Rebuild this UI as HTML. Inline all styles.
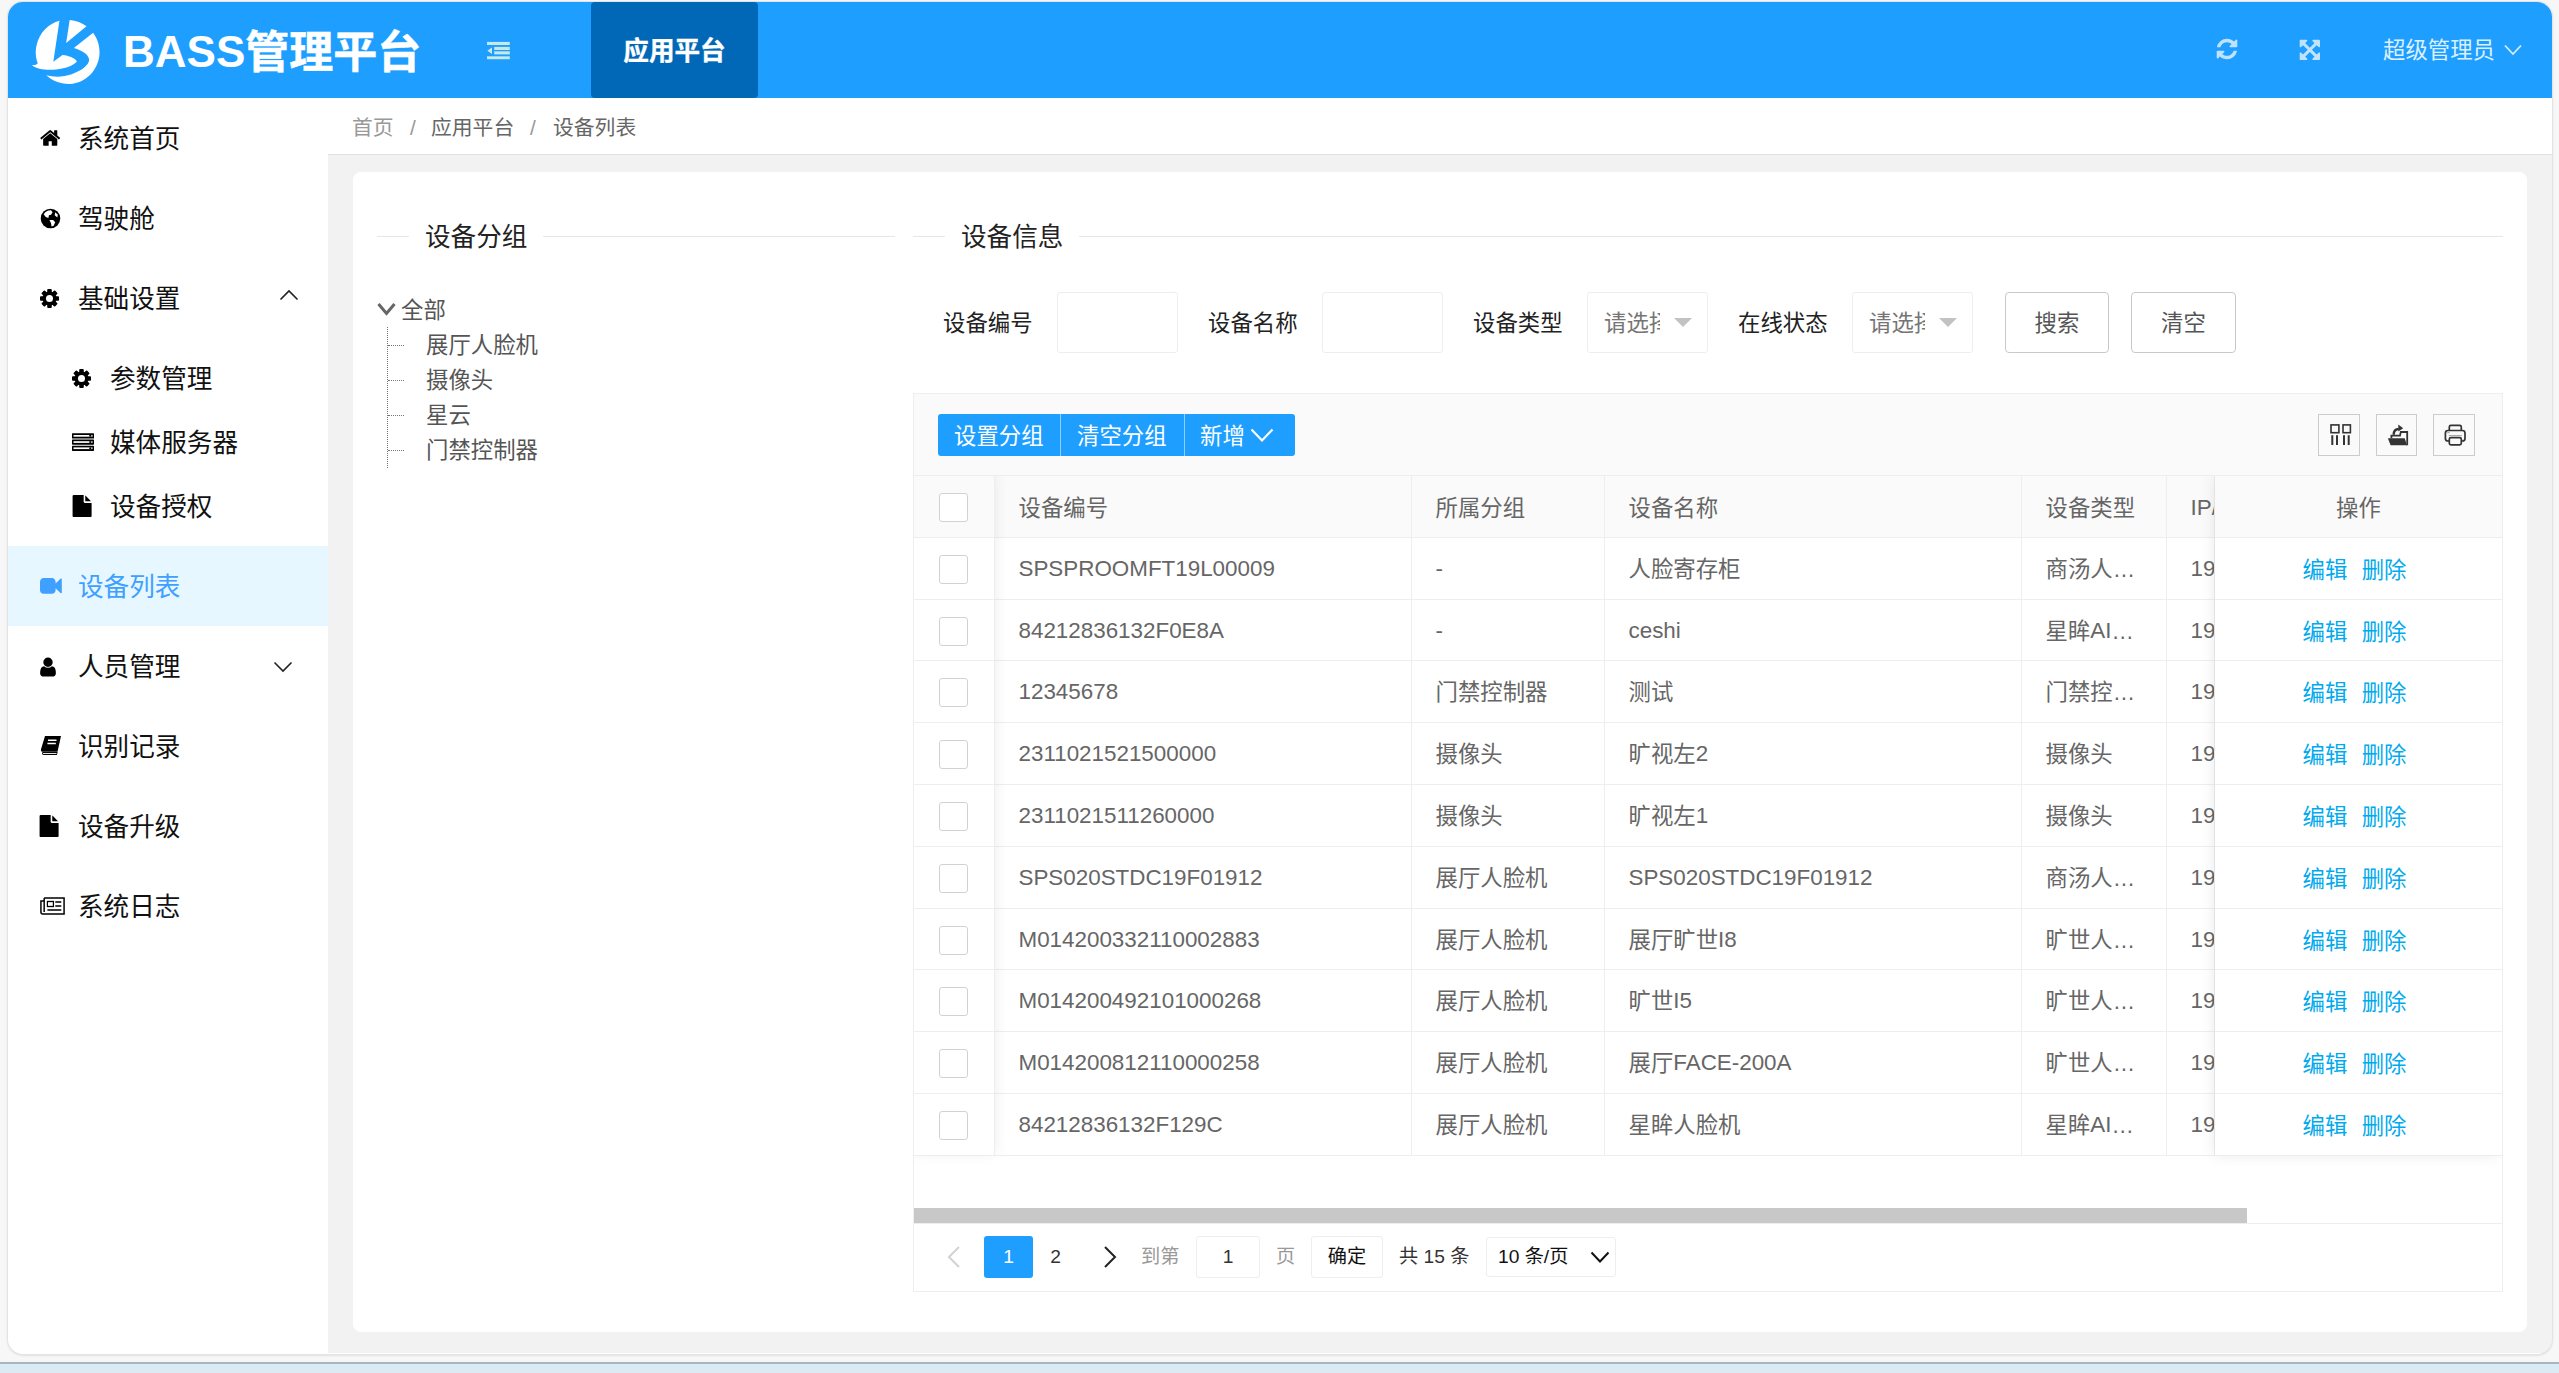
<!DOCTYPE html>
<html lang="zh-CN"><head><meta charset="utf-8"><title>BASS管理平台</title>
<style>
*{box-sizing:border-box;margin:0;padding:0}
html,body{width:2559px;height:1373px;overflow:hidden}
body{background:#f7f7f7;font-family:"Liberation Sans","Noto Sans CJK SC",sans-serif;color:#333;position:relative}
.ab{position:absolute}
.taskbar{position:absolute;left:0;top:1362px;width:2559px;height:11px;background:#daebf6;border-top:2px solid #a9b6c0}
.win{position:absolute;left:8px;top:2px;width:2544px;height:1352px;border-radius:15px;overflow:hidden;background:#f2f2f2;box-shadow:0 0 0 1px #e4e4e4,0 1px 3px rgba(0,0,0,.18)}
.pg{position:absolute;left:-8px;top:-2px;width:2559px;height:1373px}
.hdr{position:absolute;left:0;top:0;width:2559px;height:98px;background:#1e9fff}
.title{position:absolute;left:123px;top:23.5px;height:56px;line-height:56px;font-size:44px;font-weight:bold;color:#fff;white-space:nowrap}
.tab{-webkit-text-stroke:.35px #fff;position:absolute;left:591px;top:2px;width:167px;height:96px;border-radius:4px;padding-top:1px;background:#0068b7;color:#fff;font-weight:bold;font-size:25.6px;line-height:96px;text-align:center}
.uname{position:absolute;left:2383px;top:21px;height:60px;line-height:60px;font-size:22.4px;color:rgba(255,255,255,.85);white-space:nowrap}
.side{position:absolute;left:8px;top:98px;width:320px;height:1260px;background:#fff}
.mi{position:absolute;left:8px;width:320px;height:80px;line-height:80px;font-size:25.6px;color:#111;white-space:nowrap}
.mi span{position:absolute;left:70px;top:1px}
.mi.sub span{left:102px}
.mi.on{background:#e6f7ff;color:#40a0ff}
.crumb{position:absolute;left:328px;top:98px;width:2231px;height:57px;background:#fff;border-bottom:1px solid #e0e0e0;font-size:20.8px;line-height:59px;color:#666;white-space:nowrap}
.crumb span{position:absolute;top:0}
.card{position:absolute;left:353px;top:172px;width:2174px;height:1160px;background:#fff;border-radius:8px}
.lg{position:absolute;font-size:25.6px;line-height:42px;height:40px;color:#222;white-space:nowrap}
.hl{position:absolute;height:1px;background:#e6e6e6}
.tree{position:absolute;font-size:22.4px;color:#555;line-height:35.2px;height:35.2px;white-space:nowrap}
.vdot{position:absolute;width:0;border-left:1px dotted #777}
.hdot{position:absolute;height:0;border-top:1px dotted #777}
.fl{position:absolute;top:292px;height:61px;line-height:63px;font-size:22.4px;color:#222;white-space:nowrap}
.inp{position:absolute;top:292px;height:61px;border:1px solid #eee;border-radius:3px;background:#fff}
.sel{position:absolute;top:292px;height:61px;width:121px;border:1px solid #eee;border-radius:3px;background:#fff;font-size:22.4px;line-height:61px;color:#757575;overflow:hidden;white-space:nowrap}
.sel span{position:absolute;left:16px;top:0;width:56px;overflow:hidden}
.sel i{position:absolute;left:86px;top:25px;width:0;height:0;border:9.600px solid transparent;border-top-color:#c2c2c2;border-bottom-width:0}
.btn{position:absolute;top:292px;height:61px;border:1px solid #c9c9c9;border-radius:4px;background:#fff;font-size:22.4px;line-height:61px;color:#555;text-align:center;white-space:nowrap}
.tbl{position:absolute;left:913px;top:393px;width:1590px;height:899px;border:1px solid #eee;background:#fff}
.tbar{position:absolute;left:914px;top:394px;width:1588px;height:82px;background:#fafafa;border-bottom:1px solid #eee}
.bg{position:absolute;left:938px;top:414px;height:42px;background:#1e9fff;border-radius:3px;color:#fff;font-size:22.4px;line-height:42px;white-space:nowrap}
.bg span{position:absolute;top:1.5px}
.bg b{position:absolute;top:0;width:1px;height:42px;background:rgba(255,255,255,.5)}
.tool{position:absolute;top:414px;width:42px;height:42px;border:1px solid #ccc}
.th{position:absolute;left:914px;top:476px;width:1588px;height:62px;background:#fafafa;border-bottom:1px solid #eee}
.tr{position:absolute;left:914px;width:1588px;border-bottom:1px solid #eee;background:#fff}
.c{position:absolute;top:0;height:100%;font-size:22.4px;color:#666;white-space:nowrap;overflow:hidden;line-height:61px}
.th .c{line-height:63px}
.c u{text-decoration:none;position:relative;top:1px}
.vl{position:absolute;width:1px;background:#eee}
.cb{position:absolute;left:939px;width:29px;height:29px;border:1px solid #d2d2d2;border-radius:3px;background:#fff}
.lk{color:#01aaed;position:absolute;top:2px}
.sb{position:absolute;left:914px;top:1208px;width:1333px;height:15px;background:#c8c8c8}
.pgl{position:absolute;left:914px;top:1223px;width:1588px;height:1px;background:#eee}
.pp{position:absolute;top:1236px;height:42px;line-height:42px;font-size:19.200px;white-space:nowrap;color:#333}
.pbox{border:1px solid #eee;border-radius:3px;background:#fff;text-align:center;line-height:40px}
.fxclip{position:absolute;left:914px;top:476px;width:1588px;height:747px;overflow:hidden;pointer-events:none}
.fxl{position:absolute;left:0;top:0;width:81px;height:680px;box-shadow:0 -1.600px 12.800px rgba(0,0,0,.08)}
.fxr{position:absolute;left:1301px;top:0;width:287px;height:680px;box-shadow:-1.600px 0 12.800px rgba(0,0,0,.08)}

</style></head>
<body>
<div class="taskbar"></div>
<div class="win"><div class="pg">
<div class="hdr"></div>
<svg class="ab" style="left:0;top:0" width="120" height="120" viewBox="0 0 1373 1373">
<g fill="#fff">
<path d="M680 238 C560 270 450 370 418 520 C400 610 412 670 432 722 C420 745 395 748 365 743 C420 790 520 805 640 795 C760 782 850 745 880 700 C850 660 790 640 715 630 L610 706 Z"/>
<path d="M797 229 C870 235 940 262 990 300 L757 492 Z"/>
<path d="M1065 376 C1120 450 1145 540 1138 630 C1120 800 990 950 800 962 C690 965 590 920 530 862 C620 885 720 885 820 850 C930 810 1010 750 1020 690 C1022 625 940 575 845 548 Z"/>
</g></svg>
<div class="title">BASS<span style="position:relative;top:1.800px;-webkit-text-stroke:.5px #fff">管理平台</span></div>
<svg class="ab" style="left:487px;top:41px" width="24" height="19" viewBox="0 0 24 19"><g fill="#c5e9e6"><rect x="0" y="0.900" width="22.800" height="3.100"/><rect x="7.200" y="5.900" width="15.600" height="3.100"/><rect x="7.200" y="10.300" width="15.600" height="3.100"/><rect x="0" y="15.300" width="22.800" height="2.900"/><path d="M0.300 9.700 L5 6.500 V13Z"/></g></svg>
<div class="tab">应用平台</div>
<svg class="ab" style="left:2214.8px;top:37.3px" width="24.0" height="24.0" viewBox="0 0 1792 1792"><path fill="#bfe3ff" d="M1639 1056q0 5-1 7-64 268-268 434.500t-478 166.500q-146 0-282.500-55t-243.500-157l-129 129q-19 19-45 19t-45-19-19-45v-448q0-26 19-45t45-19h448q26 0 45 19t19 45-19 45l-137 137q71 66 161 102t187 36q134 0 250-65t186-179q11-17 53-117 8-23 30-23h192q13 0 22.500 9.500t9.500 22.500zm25-800v448q0 26-19 45t-45 19h-448q-26 0-45-19t-19-45 19-45l138-138q-148-137-349-137-134 0-250 65t-186 179q-11 17-53 117-8 23-30 23h-199q-13 0-22.500-9.500t-9.500-22.500v-7q65-268 270-434.500t480-166.500q146 0 284 55.500t245 156.500l130-129q19-19 45-19t45 19 19 45z"/></svg>
<svg class="ab" style="left:2298.3px;top:37.5px" width="23.7" height="23.7" viewBox="0 0 1792 1792"><path fill="#bfe3ff" d="M1411 541l-355 355 355 355 144-144q29-31 70-14 39 17 39 59v448q0 26-19 45t-45 19h-448q-42 0-59-40-17-39 14-69l144-144-355-355-355 355 144 144q31 30 14 69-17 40-59 40h-448q-26 0-45-19t-19-45v-448q0-42 40-59 39-17 69 14l144 144 355-355-355-355-144 144q-19 19-45 19-12 0-24-5-40-17-40-59v-448q0-26 19-45t45-19h448q42 0 59 40 17 39-14 69l-144 144 355 355 355-355-144-144q-31-30-14-69 17-40 59-40h448q26 0 45 19t19 45v448q0 42-39 59-13 5-25 5-26 0-45-19z"/></svg>
<div class="uname">超级管理员</div>
<svg class="ab" style="left:2504px;top:44px" width="18" height="12" viewBox="0 0 18 12"><path d="M1 1.5 L9 10 L17 1.5" fill="none" stroke="#d5edff" stroke-width="1.8"/></svg>
<div class="side"></div>
<div class="mi" style="top:98px"><svg class="ab" style="left:31.5px;top:29.0px" width="22.0" height="22.0" viewBox="0 0 1792 1792"><path fill="#000" d="M1408 992v480q0 26-19 45t-45 19h-384v-384h-256v384h-384q-26 0-45-19t-19-45v-480q0-1 .5-3t.5-3l575-474 575 474q1 2 1 6zm223-69l-62 74q-8 9-21 11h-3q-13 0-21-7l-692-577-692 577q-12 8-24 7-13-2-21-11l-62-74q-8-10-7-23.5t11-21.5l719-599q32-26 76-26t76 26l244 204v-195q0-14 9-23t23-9h192q14 0 23 9t9 23v408l219 182q10 8 11 21.5t-7 23.5z"/></svg><span>系统首页</span></div>
<div class="mi" style="top:178px"><svg class="ab" style="left:31.500px;top:29.500px" width="21" height="21" viewBox="0 0 20 20"><circle cx="10" cy="10" r="9.300" fill="#000"/><path d="M3.5 6 C5 3.5 8 2 10.5 2.2 L12 4 L10.5 6.5 L8.5 7 L8 9.5 L5.5 8.5Z M9 11.5 L12.5 11.5 L14.5 13.5 L13 17 L11 17.5 L10.5 14.5Z M14.5 4 L17 6.5 L16.5 9 L14 7Z" fill="#fff"/></svg><span>驾驶舱</span></div>
<div class="mi" style="top:258px"><svg class="ab" style="left:32.0px;top:31.0px" width="19.0" height="19.0" viewBox="-10 -10 20 20"><g fill="#000"><rect x="-2.400" y="-10" width="4.800" height="20" rx="1" transform="rotate(0)"/><rect x="-2.400" y="-10" width="4.800" height="20" rx="1" transform="rotate(45)"/><rect x="-2.400" y="-10" width="4.800" height="20" rx="1" transform="rotate(90)"/><rect x="-2.400" y="-10" width="4.800" height="20" rx="1" transform="rotate(135)"/><circle r="7.4"/></g><circle r="3.700" fill="#fff"/></svg><span>基础设置</span><svg class="ab" style="left:271px;top:30.500px" width="20" height="12" viewBox="0 0 20 12"><path d="M1.5 10.5 L10 2 L18.500 10.500" fill="none" stroke="#222" stroke-width="1.6"/></svg></div>
<div class="mi sub" style="top:338px;height:80px"><svg class="ab" style="left:64.0px;top:31.0px" width="19.0" height="19.0" viewBox="-10 -10 20 20"><g fill="#000"><rect x="-2.400" y="-10" width="4.800" height="20" rx="1" transform="rotate(0)"/><rect x="-2.400" y="-10" width="4.800" height="20" rx="1" transform="rotate(45)"/><rect x="-2.400" y="-10" width="4.800" height="20" rx="1" transform="rotate(90)"/><rect x="-2.400" y="-10" width="4.800" height="20" rx="1" transform="rotate(135)"/><circle r="7.4"/></g><circle r="3.700" fill="#fff"/></svg><span>参数管理</span></div>
<div class="mi sub" style="top:402px"><svg class="ab" style="left:64px;top:31px" width="22" height="18" viewBox="0 0 22 18"><g fill="#000"><rect x="0" y="0.300" width="22" height="5.200" rx=".6"/><rect x="0" y="6.500" width="22" height="5.200" rx=".6"/><rect x="0" y="12.700" width="22" height="5.200" rx=".6"/></g><g fill="#fff"><rect x="1.500" y="2" width="19" height="1.700"/><rect x="1.500" y="8.200" width="19" height="1.700"/><rect x="1.500" y="14.400" width="19" height="1.700"/></g><g fill="#000"><rect x="17.300" y="2" width="2" height="1.700"/><rect x="17.300" y="8.200" width="2" height="1.700"/><rect x="17.300" y="14.400" width="2" height="1.700"/></g></svg><span>媒体服务器</span></div>
<div class="mi sub" style="top:466px"><svg class="ab" style="left:62.5px;top:29.1px" width="22.2" height="22.2" viewBox="0 0 1792 1792"><path fill="#000" d="M1152 512v-472q22 14 36 28l408 408q14 14 28 36h-472zm-128 32q0 40 28 68t68 28h544v1056q0 40-28 68t-68 28h-1344q-40 0-68-28t-28-68v-1600q0-40 28-68t68-28h800v544z"/></svg><span>设备授权</span></div>
<div class="mi on" style="top:546px"><svg class="ab" style="left:32.4px;top:29.3px" width="21.8" height="21.8" viewBox="0 0 1792 1792"><path fill="#40a0ff" d="M1792 352v1088q0 42-39 59-13 5-25 5-27 0-45-19l-403-403v166q0 119-84.500 203.500t-203.500 84.500h-704q-119 0-203.500-84.500t-84.500-203.500v-704q0-119 84.500-203.500t203.500-84.500h704q119 0 203.500 84.500t84.500 203.500v165l403-402q18-19 45-19 12 0 25 5 39 17 39 59z"/></svg><span>设备列表</span></div>
<div class="mi" style="top:626px"><svg class="ab" style="left:29.0px;top:29.5px" width="22.0" height="22.0" viewBox="0 0 1792 1792"><path fill="#000" d="M1536 1399q0 109-62.500 187t-150.500 78h-854q-88 0-150.500-78t-62.500-187q0-85 8.500-160.500t31.500-152 58.500-131 94-89 134.500-34.500q131 128 313 128t313-128q76 0 134.500 34.500t94 89 58.500 131 31.500 152 8.500 160.500zm-256-887q0 159-112.500 271.500t-271.500 112.500-271.500-112.500-112.500-271.500 112.500-271.500 271.500-112.500 271.500 112.500 112.500 271.500z"/></svg><span>人员管理</span><svg class="ab" style="left:265px;top:35px" width="20" height="12" viewBox="0 0 20 12"><path d="M1.5 1.500 L10 10 L18.500 1.500" fill="none" stroke="#222" stroke-width="1.600"/></svg></div>
<div class="mi" style="top:706px"><svg class="ab" style="left:31.500px;top:29px" width="22" height="21" viewBox="0 0 22 20" preserveAspectRatio="none"><path d="M5 1 H21 L17.500 16 H3 C1.500 16 .5 15 1 13.500Z" fill="#000"/><path d="M3.200 16.300 H17.600 L17 19 H3.500 C1.800 19 1.500 16.300 3.200 16.300Z" fill="#000"/><path d="M8 5 H16.500 M7.400 8 H15.800" stroke="#fff" stroke-width="1.400"/><path d="M3 17.600 H16.500" stroke="#fff" stroke-width=".9"/></svg><span>识别记录</span></div>
<div class="mi" style="top:786px"><svg class="ab" style="left:30.4px;top:28.8px" width="22.2" height="22.2" viewBox="0 0 1792 1792"><path fill="#000" d="M1152 512v-472q22 14 36 28l408 408q14 14 28 36h-472zm-128 32q0 40 28 68t68 28h544v1056q0 40-28 68t-68 28h-1344q-40 0-68-28t-28-68v-1600q0-40 28-68t68-28h800v544z"/></svg><span>设备升级</span></div>
<div class="mi" style="top:866px"><svg class="ab" style="left:32px;top:30.500px" width="25" height="18" viewBox="0 0 27 18" preserveAspectRatio="none"><path d="M4.500 1 H26 V17 H3 C1.800 17 1 16 1 15 V4 H4.500" fill="none" stroke="#000" stroke-width="1.600"/><path d="M4.500 1 V15" stroke="#000" stroke-width="1.600"/><rect x="8" y="4.500" width="6.500" height="5" fill="none" stroke="#000" stroke-width="1.300"/><path d="M16.500 5 H23 M16.500 9 H23 M8 13 H23" stroke="#000" stroke-width="1.500"/></svg><span>系统日志</span></div>
<div class="crumb"><span style="left:24px;color:#999">首页</span><span style="left:82px;color:#999">/</span><span style="left:103px">应用平台</span><span style="left:202px;color:#999">/</span><span style="left:225px">设备列表</span></div>
<div class="card"></div>
<div class="hl" style="left:377px;top:236px;width:518px"></div>
<div class="lg" style="left:409px;top:216px;width:134px;background:#fff;padding-left:16px">设备分组</div>
<div class="hl" style="left:913px;top:236px;width:1590px"></div>
<div class="lg" style="left:945px;top:216px;width:134px;background:#fff;padding-left:16px">设备信息</div>
<div class="ab botline" style="left:8px;top:1353px;width:2544px;height:1px;background:#fff"></div>
<svg class="ab" style="left:377px;top:302px" width="19" height="14" viewBox="0 0 19 14"><path d="M1.500 2 L9.500 11.500 L17.500 2" fill="none" stroke="#666" stroke-width="3"/></svg>
<div class="tree" style="left:401px;top:293px">全部</div>
<div class="vdot" style="left:387px;top:327px;height:141px"></div>
<div class="hdot" style="left:388px;top:345px;width:16px"></div>
<div class="tree" style="left:426px;top:327.8px">展厅人脸机</div>
<div class="hdot" style="left:388px;top:380px;width:16px"></div>
<div class="tree" style="left:426px;top:363.0px">摄像头</div>
<div class="hdot" style="left:388px;top:415px;width:16px"></div>
<div class="tree" style="left:426px;top:398.2px">星云</div>
<div class="hdot" style="left:388px;top:450px;width:16px"></div>
<div class="tree" style="left:426px;top:433.4px">门禁控制器</div>
<div class="fl" style="left:943px">设备编号</div><div class="inp" style="left:1057px;width:121px"></div>
<div class="fl" style="left:1208px">设备名称</div><div class="inp" style="left:1322px;width:121px"></div>
<div class="fl" style="left:1473px">设备类型</div><div class="sel" style="left:1587px"><span>请选择</span><i></i></div>
<div class="fl" style="left:1738px">在线状态</div><div class="sel" style="left:1852px"><span>请选择</span><i></i></div>
<div class="btn" style="left:2005px;width:104px">搜索</div><div class="btn" style="left:2131px;width:105px">清空</div>
<div class="tbl"></div><div class="tbar"></div>
<div class="bg" style="width:357px"><span style="left:16px">设置分组</span><b style="left:122px"></b><span style="left:139px">清空分组</span><b style="left:246px"></b><span style="left:262px">新增</span><svg class="ab" style="left:312px;top:14px" width="24" height="15" viewBox="0 0 24 15"><path d="M1.500 1.500 L12 12.500 L22.500 1.500" fill="none" stroke="#fff" stroke-width="2.200"/></svg></div>
<div class="tool" style="left:2318px"><svg class="ab" style="left:-1px;top:-1px" width="42" height="42" viewBox="0 0 42 42"><g fill="none" stroke="#333" stroke-width="1.600"><rect x="13" y="10.900" width="7.900" height="7.800"/><rect x="25" y="10.900" width="7.400" height="7.800"/></g><g fill="#333"><rect x="13.300" y="21.200" width="2" height="9.800"/><rect x="18" y="21.200" width="2" height="9.800"/><rect x="25" y="21.200" width="2" height="9.800"/><rect x="29.700" y="21.200" width="2" height="9.800"/></g></svg></div>
<div class="tool" style="left:2376px;width:41px"><svg class="ab" style="left:-1px;top:-1px" width="42" height="42" viewBox="0 0 42 42"><path d="M11.900 24.300 H28.700 L31 31.300 H14.600Z" fill="#333"/><path d="M15.400 24.300 V21.600 H24 L24.800 18 H31.200 V31.300" fill="none" stroke="#333" stroke-width="1.800"/><path d="M17.700 20.800 C17.700 17.200 19.500 15 22.800 15" fill="none" stroke="#333" stroke-width="2.300"/><path d="M22.300 10.600 L27.200 14.200 L22.300 17.500Z" fill="#333"/></svg></div>
<div class="tool" style="left:2433px"><svg class="ab" style="left:-1px;top:-1px" width="42" height="42" viewBox="0 0 42 42"><g fill="none" stroke="#333" stroke-width="1.700"><path d="M16.300 16.500 V13 Q16.300 11.400 17.900 11.400 H26.700 Q28.300 11.400 28.300 13 V16.500"/><rect x="12.400" y="16.500" width="19.600" height="10.500" rx="2.600"/><rect x="16.300" y="23.600" width="12" height="7.300" rx="1.600" fill="#fafafa"/></g><path d="M14.300 18.700 H16.600" stroke="#888" stroke-width=".9"/><path d="M15.800 21.600 H28.800" stroke="#888" stroke-width=".8"/></svg></div>
<div class="th"><div class="c" style="left:81px;width:416px;padding-left:23.5px"><u>设备编号</u></div><div class="c" style="left:498px;width:192px;padding-left:23.5px"><u>所属分组</u></div><div class="c" style="left:691px;width:416px;padding-left:23.5px"><u>设备名称</u></div><div class="c" style="left:1108px;width:144px;padding-left:23.5px"><u>设备类型</u></div><div class="c" style="left:1253px;width:47px;padding-left:23.5px">IP/<u>端口</u></div><div class="c" style="left:1301px;width:287px;text-align:center;background:inherit"><u>操作</u></div></div>
<div class="cb" style="top:493px"></div>
<div class="tr" style="top:538px;height:62px"><div class="c" style="left:81px;width:416px;padding-left:23.5px">SPSPROOMFT19L00009</div><div class="c" style="left:498px;width:192px;padding-left:23.5px">-</div><div class="c" style="left:691px;width:416px;padding-left:23.5px"><u>人脸寄存柜</u></div><div class="c" style="left:1108px;width:144px;padding-left:23.5px"><u>商汤人…</u></div><div class="c" style="left:1253px;width:47px;padding-left:23.5px">192.168.1.1</div><div class="c" style="left:1301px;width:287px;text-align:center;background:inherit"><span class="lk" style="left:87.500px">编辑</span><span class="lk" style="left:146.700px">删除</span></div></div>
<div class="cb" style="top:555px"></div>
<div class="tr" style="top:600px;height:61px"><div class="c" style="left:81px;width:416px;padding-left:23.5px">84212836132F0E8A</div><div class="c" style="left:498px;width:192px;padding-left:23.5px">-</div><div class="c" style="left:691px;width:416px;padding-left:23.5px">ceshi</div><div class="c" style="left:1108px;width:144px;padding-left:23.5px"><u>星眸</u>AI<u>…</u></div><div class="c" style="left:1253px;width:47px;padding-left:23.5px">192.168.1.1</div><div class="c" style="left:1301px;width:287px;text-align:center;background:inherit"><span class="lk" style="left:87.500px">编辑</span><span class="lk" style="left:146.700px">删除</span></div></div>
<div class="cb" style="top:617px"></div>
<div class="tr" style="top:661px;height:62px"><div class="c" style="left:81px;width:416px;padding-left:23.5px">12345678</div><div class="c" style="left:498px;width:192px;padding-left:23.5px"><u>门禁控制器</u></div><div class="c" style="left:691px;width:416px;padding-left:23.5px"><u>测试</u></div><div class="c" style="left:1108px;width:144px;padding-left:23.5px"><u>门禁控…</u></div><div class="c" style="left:1253px;width:47px;padding-left:23.5px">192.168.1.1</div><div class="c" style="left:1301px;width:287px;text-align:center;background:inherit"><span class="lk" style="left:87.500px">编辑</span><span class="lk" style="left:146.700px">删除</span></div></div>
<div class="cb" style="top:678px"></div>
<div class="tr" style="top:723px;height:62px"><div class="c" style="left:81px;width:416px;padding-left:23.5px">2311021521500000</div><div class="c" style="left:498px;width:192px;padding-left:23.5px"><u>摄像头</u></div><div class="c" style="left:691px;width:416px;padding-left:23.5px"><u>旷视左</u>2</div><div class="c" style="left:1108px;width:144px;padding-left:23.5px"><u>摄像头</u></div><div class="c" style="left:1253px;width:47px;padding-left:23.5px">192.168.1.1</div><div class="c" style="left:1301px;width:287px;text-align:center;background:inherit"><span class="lk" style="left:87.500px">编辑</span><span class="lk" style="left:146.700px">删除</span></div></div>
<div class="cb" style="top:740px"></div>
<div class="tr" style="top:785px;height:62px"><div class="c" style="left:81px;width:416px;padding-left:23.5px">2311021511260000</div><div class="c" style="left:498px;width:192px;padding-left:23.5px"><u>摄像头</u></div><div class="c" style="left:691px;width:416px;padding-left:23.5px"><u>旷视左</u>1</div><div class="c" style="left:1108px;width:144px;padding-left:23.5px"><u>摄像头</u></div><div class="c" style="left:1253px;width:47px;padding-left:23.5px">192.168.1.1</div><div class="c" style="left:1301px;width:287px;text-align:center;background:inherit"><span class="lk" style="left:87.500px">编辑</span><span class="lk" style="left:146.700px">删除</span></div></div>
<div class="cb" style="top:802px"></div>
<div class="tr" style="top:847px;height:62px"><div class="c" style="left:81px;width:416px;padding-left:23.5px">SPS020STDC19F01912</div><div class="c" style="left:498px;width:192px;padding-left:23.5px"><u>展厅人脸机</u></div><div class="c" style="left:691px;width:416px;padding-left:23.5px">SPS020STDC19F01912</div><div class="c" style="left:1108px;width:144px;padding-left:23.5px"><u>商汤人…</u></div><div class="c" style="left:1253px;width:47px;padding-left:23.5px">192.168.1.1</div><div class="c" style="left:1301px;width:287px;text-align:center;background:inherit"><span class="lk" style="left:87.500px">编辑</span><span class="lk" style="left:146.700px">删除</span></div></div>
<div class="cb" style="top:864px"></div>
<div class="tr" style="top:909px;height:61px"><div class="c" style="left:81px;width:416px;padding-left:23.5px">M014200332110002883</div><div class="c" style="left:498px;width:192px;padding-left:23.5px"><u>展厅人脸机</u></div><div class="c" style="left:691px;width:416px;padding-left:23.5px"><u>展厅旷世</u>I8</div><div class="c" style="left:1108px;width:144px;padding-left:23.5px"><u>旷世人…</u></div><div class="c" style="left:1253px;width:47px;padding-left:23.5px">192.168.1.1</div><div class="c" style="left:1301px;width:287px;text-align:center;background:inherit"><span class="lk" style="left:87.500px">编辑</span><span class="lk" style="left:146.700px">删除</span></div></div>
<div class="cb" style="top:926px"></div>
<div class="tr" style="top:970px;height:62px"><div class="c" style="left:81px;width:416px;padding-left:23.5px">M014200492101000268</div><div class="c" style="left:498px;width:192px;padding-left:23.5px"><u>展厅人脸机</u></div><div class="c" style="left:691px;width:416px;padding-left:23.5px"><u>旷世</u>I5</div><div class="c" style="left:1108px;width:144px;padding-left:23.5px"><u>旷世人…</u></div><div class="c" style="left:1253px;width:47px;padding-left:23.5px">192.168.1.1</div><div class="c" style="left:1301px;width:287px;text-align:center;background:inherit"><span class="lk" style="left:87.500px">编辑</span><span class="lk" style="left:146.700px">删除</span></div></div>
<div class="cb" style="top:987px"></div>
<div class="tr" style="top:1032px;height:62px"><div class="c" style="left:81px;width:416px;padding-left:23.5px">M014200812110000258</div><div class="c" style="left:498px;width:192px;padding-left:23.5px"><u>展厅人脸机</u></div><div class="c" style="left:691px;width:416px;padding-left:23.5px"><u>展厅</u>FACE-200A</div><div class="c" style="left:1108px;width:144px;padding-left:23.5px"><u>旷世人…</u></div><div class="c" style="left:1253px;width:47px;padding-left:23.5px">192.168.1.1</div><div class="c" style="left:1301px;width:287px;text-align:center;background:inherit"><span class="lk" style="left:87.500px">编辑</span><span class="lk" style="left:146.700px">删除</span></div></div>
<div class="cb" style="top:1049px"></div>
<div class="tr" style="top:1094px;height:62px"><div class="c" style="left:81px;width:416px;padding-left:23.5px">84212836132F129C</div><div class="c" style="left:498px;width:192px;padding-left:23.5px"><u>展厅人脸机</u></div><div class="c" style="left:691px;width:416px;padding-left:23.5px"><u>星眸人脸机</u></div><div class="c" style="left:1108px;width:144px;padding-left:23.5px"><u>星眸</u>AI<u>…</u></div><div class="c" style="left:1253px;width:47px;padding-left:23.5px">192.168.1.1</div><div class="c" style="left:1301px;width:287px;text-align:center;background:inherit"><span class="lk" style="left:87.500px">编辑</span><span class="lk" style="left:146.700px">删除</span></div></div>
<div class="cb" style="top:1111px"></div>
<div class="vl" style="left:994px;top:476px;height:680px"></div>
<div class="vl" style="left:1411px;top:476px;height:680px"></div>
<div class="vl" style="left:1604px;top:476px;height:680px"></div>
<div class="vl" style="left:2021px;top:476px;height:680px"></div>
<div class="vl" style="left:2166px;top:476px;height:680px"></div>
<div class="vl" style="left:2214px;top:476px;height:680px"></div>
<div class="fxclip"><div class="fxl"></div><div class="fxr"></div></div>
<div class="sb"></div><div class="pgl"></div>
<svg class="ab" style="left:946px;top:1245px" width="15" height="24" viewBox="0 0 15 24"><path d="M13 2 L3 12 L13 22" fill="none" stroke="#d2d2d2" stroke-width="2"/></svg>
<div class="pp" style="left:984px;width:49px;background:#1e9fff;color:#fff;text-align:center;border-radius:3px">1</div>
<div class="pp" style="left:1033px;width:45px;text-align:center">2</div>
<svg class="ab" style="left:1103px;top:1245px" width="15" height="24" viewBox="0 0 15 24"><path d="M2 2 L12 12 L2 22" fill="none" stroke="#222" stroke-width="2"/></svg>
<div class="pp" style="left:1141px;color:#999">到第</div>
<div class="pp pbox" style="left:1196px;width:64px">1</div>
<div class="pp" style="left:1276px;color:#999">页</div>
<div class="pp pbox" style="left:1311px;width:72px;color:#111">确定</div>
<div class="pp" style="left:1399px">共 15 条</div>
<div class="pp pbox" style="left:1486px;width:130px;text-align:left;padding-left:11px;color:#111;top:1237px;height:40px;line-height:38px">10 条/页<svg class="ab" style="left:103px;top:13px" width="20" height="13" viewBox="0 0 20 13"><path d="M1.500 1.500 L10 10.500 L18.500 1.500" fill="none" stroke="#111" stroke-width="2"/></svg></div>

</div></div>
</body></html>
